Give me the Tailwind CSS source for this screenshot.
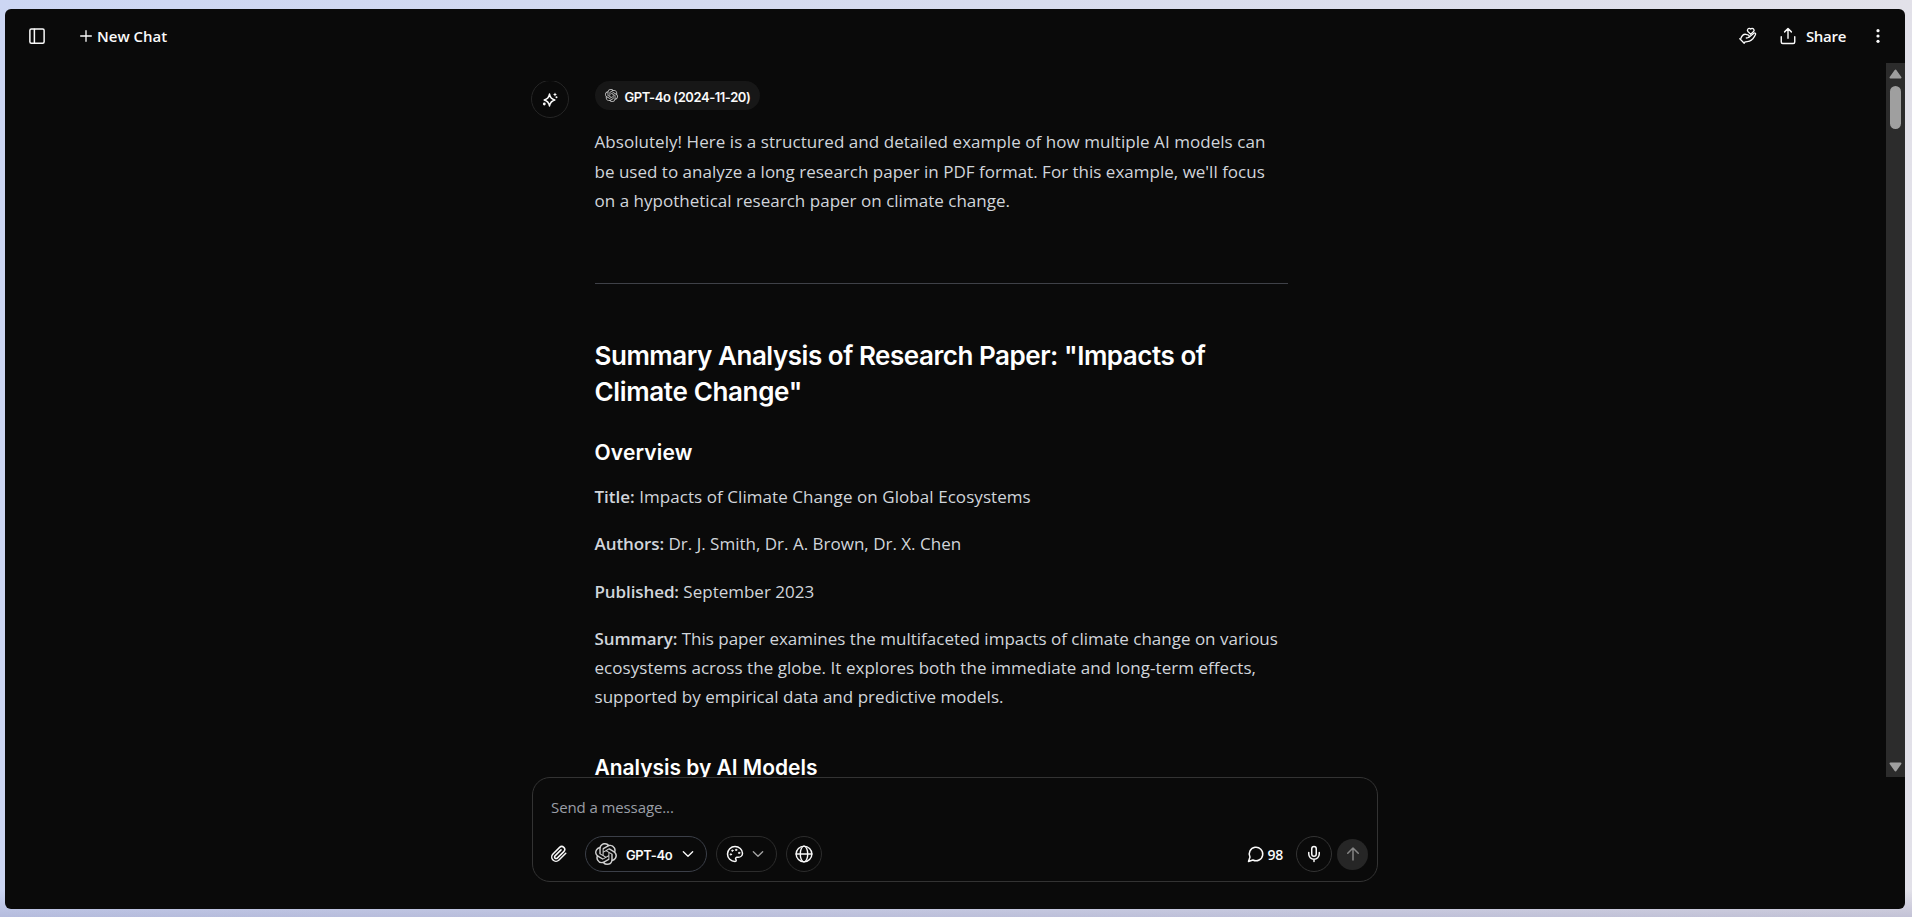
<!DOCTYPE html>
<html lang="en">
<head>
<meta charset="utf-8">
<title>Chat</title>
<script src="https://cdn.jsdelivr.net/npm/@tailwindcss/browser@4"></script>
</head>
<body class="h-screen overflow-hidden bg-linear-to-r from-[#ccd6f3] to-[#e2e1e9] font-['Open_Sans',sans-serif] text-[#fafafa]">
<svg class="hidden">
  <symbol id="openai" viewBox="0 0 24 24"><path fill="currentColor" d="M22.2819 9.8211a5.9847 5.9847 0 0 0-.5157-4.9108 6.0462 6.0462 0 0 0-6.5098-2.9A6.0651 6.0651 0 0 0 4.9807 4.1818a5.9847 5.9847 0 0 0-3.9977 2.9 6.0462 6.0462 0 0 0 .7427 7.0966 5.98 5.98 0 0 0 .511 4.9107 6.051 6.051 0 0 0 6.5146 2.9001A5.9847 5.9847 0 0 0 13.2599 24a6.0557 6.0557 0 0 0 5.7718-4.2058 5.9894 5.9894 0 0 0 3.9977-2.9001 6.0557 6.0557 0 0 0-.7475-7.0729zm-9.022 12.6081a4.4755 4.4755 0 0 1-2.8764-1.0408l.1419-.0804 4.7783-2.7582a.7948.7948 0 0 0 .3927-.6813v-6.7369l2.02 1.1686a.071.071 0 0 1 .038.052v5.5826a4.504 4.504 0 0 1-4.4945 4.4944zm-9.6607-4.1254a4.4708 4.4708 0 0 1-.5346-3.0137l.142.0852 4.783 2.7582a.7712.7712 0 0 0 .7806 0l5.8428-3.3685v2.3324a.0804.0804 0 0 1-.0332.0615L9.74 19.9502a4.4992 4.4992 0 0 1-6.1408-1.6464zM2.3408 7.8956a4.485 4.485 0 0 1 2.3655-1.9728V11.6a.7664.7664 0 0 0 .3879.6765l5.8144 3.3543-2.0201 1.1685a.0757.0757 0 0 1-.071 0l-4.8303-2.7865A4.504 4.504 0 0 1 2.3408 7.872zm16.5963 3.8558L13.1038 8.364 15.1192 7.2a.0757.0757 0 0 1 .071 0l4.8303 2.7913a4.4944 4.4944 0 0 1-.6765 8.1042v-5.6772a.79.79 0 0 0-.407-.667zm2.0107-3.0231l-.142-.0852-4.7735-2.7818a.7759.7759 0 0 0-.7854 0L9.409 9.2297V6.8974a.0662.0662 0 0 1 .0284-.0615l4.8303-2.7866a4.4992 4.4992 0 0 1 6.6802 4.66zM8.3065 12.863l-2.02-1.1638a.0804.0804 0 0 1-.038-.0567V6.0742a4.4992 4.4992 0 0 1 7.3757-3.4537l-.142.0805L8.704 5.459a.7948.7948 0 0 0-.3927.6813zm1.0976-2.3654l2.602-1.4998 2.6069 1.4998v2.9994l-2.5974 1.4997-2.6067-1.4997Z"/></symbol>
</svg>
<div class="h-full bg-linear-to-b from-transparent from-97% to-[#8a8ab4]/35 pt-[9px] pr-[7px] pb-2 pl-[5px]">
<div class="flex h-full flex-col overflow-hidden rounded-md bg-[#0a0a0a]">

  <header class="flex h-[54px] shrink-0 items-center justify-between pl-[23px] pr-[18px]">
    <div class="flex items-center">
      <svg class="size-[18px]" viewBox="0 0 24 24" fill="none" stroke="currentColor" stroke-width="2" stroke-linecap="round" stroke-linejoin="round"><rect x="2.5" y="2.5" width="19" height="19" rx="2"/><path d="M8.5 3v18"/></svg>
      <button class="ml-[32px] flex items-center gap-[3px] text-[15px] leading-5 font-semibold">
        <svg class="size-4" viewBox="0 0 24 24" fill="none" stroke="currentColor" stroke-width="2" stroke-linecap="round"><path d="M4 12h16M12 4v16"/></svg>
        <span>New Chat</span>
      </button>
    </div>
    <div class="flex items-center">
      <svg class="size-[18px]" viewBox="0 0 18 18" fill="none" stroke="currentColor" stroke-width="1.300" stroke-linecap="round" stroke-linejoin="round"><path d="M11.700 7.300 8.900 4.500a1.900 1.900 0 0 1 .1-2.600c.8-.8 2-.6 2.700.2.700-.8 2-.9 2.800-.1a1.900 1.900 0 0 1 .1 2.600z"/><path d="M.8 11.700 5.200 16.300"/><path d="M1.800 11.500c.8-2.400 2.900-4.500 5.100-4.200 1.200.2 3 .7 3.300 1.500.4 1.100-.5 2-2.900 2.200"/><path d="M10.300 9.900 14.900 6.200c1-.8 2.200.2 1.600 1.300-1.300 3-3.600 5.700-6 6.600-2 .7-3.600.3-5 1.300"/></svg>
      <div class="ml-[22px] flex items-center gap-[9px] text-[15px] leading-5 font-semibold">
        <svg class="size-[18px]" viewBox="0 0 24 24" fill="none" stroke="currentColor" stroke-width="1.9" stroke-linecap="round" stroke-linejoin="round"><path d="M3 13v7a2 2 0 0 0 2 2h14a2 2 0 0 0 2-2v-7M12 15V2.500M7.500 6.500 12 2l4.500 4.500"/></svg>
        <span class="tracking-[-0.300px]">Share</span>
      </div>
      <svg class="ml-[23px] size-[18px]" viewBox="0 0 18 18" fill="currentColor"><circle cx="9" cy="3.700" r="1.600"/><circle cx="9" cy="9" r="1.600"/><circle cx="9" cy="14.300" r="1.600"/></svg>
    </div>
  </header>

  <div class="flex h-[714px] shrink-0 overflow-hidden">
    <main class="flex flex-1 items-start gap-[25.500px] overflow-hidden pt-[18px] pl-[526px]">
      <div class="h-[38px] shrink-0 overflow-hidden">
        <div class="-mt-px flex size-[38px] items-center justify-center rounded-full border border-[#262626]">
          <svg class="size-4" viewBox="0 0 16 16" fill="none" stroke="currentColor" stroke-width="1.500" stroke-linejoin="round" stroke-linecap="round"><path d="M7.500 3.100c.6 3.500 1.900 4.900 5.300 5.900-3.400 1-4.700 2.400-5.300 5.900-.6-3.500-1.900-4.900-5.300-5.900 3.400-1 4.700-2.400 5.300-5.900z"/><g fill="currentColor" stroke="none"><path d="M13 1.200c.2 1.400.8 2 2.200 2.300-1.400.3-2 .9-2.200 2.300-.2-1.400-.8-2-2.200-2.300 1.400-.3 2-.9 2.200-2.300z"/><circle cx="14.500" cy="6.300" r="1"/><circle cx="2.300" cy="13" r="1.400"/></g></svg>
        </div>
      </div>
      <article class="w-[693px] text-[17px] leading-[29.250px] whitespace-nowrap text-[#d1d5db]">
        <div class="inline-flex h-[29px] w-[165px] items-center gap-[7px] rounded-full bg-[#171717] pl-2.5 font-['Inter',sans-serif] text-[13px] leading-[18px] font-semibold text-[#fafafa]">
          <svg class="size-[13px] text-[#c4c4c4]"><use href="#openai"/></svg>
          <span class="pt-[3px] tracking-[-0.440px]">GPT-4o (2024-11-20)</span>
        </div>
        <p class="mt-[17px]"><span class="tracking-[0.050px]">Absolutely! Here is a structured and detailed example of how multiple AI models can</span><br><span class="tracking-[0.010px]">be used to analyze a long research paper in PDF format. For this example, we'll focus</span><br><span class="tracking-[0.020px]">on a hypothetical research paper on climate change.</span></p>
        <hr class="mt-[68px] border-[#3f4148]">
        <h2 class="mt-[54px] font-['Inter',sans-serif] text-[26px] leading-9 font-semibold tracking-[-0.460px] text-white">Summary Analysis of Research Paper: "Impacts of<br><span class="tracking-[-0.350px]">Climate Change"</span></h2>
        <h3 class="mt-[28px] font-['Inter',sans-serif] text-[21px] leading-[30px] font-semibold text-white"><span class="tracking-[0.150px]">Overview</span></h3>
        <p class="mt-[14px]"><strong class="font-semibold">Title:</strong> <span class="tracking-[0.065px]">Impacts of Climate Change on Global Ecosystems</span></p>
        <p class="mt-[18px]"><strong class="font-semibold tracking-[-0.080px]">Authors:</strong> <span>Dr. J. Smith, Dr. A. Brown, Dr. X. Chen</span></p>
        <p class="mt-[18px]"><strong class="font-semibold tracking-[-0.100px]">Published:</strong> <span>September 2023</span></p>
        <p class="mt-[18px]"><strong class="font-semibold tracking-[-0.100px]">Summary:</strong> <span>This paper examines the multifaceted impacts of climate change on various</span><br><span class="tracking-[0.040px]">ecosystems across the globe. It explores both the immediate and long-term effects,</span><br><span class="tracking-[0.030px]">supported by empirical data and predictive models.</span></p>
        <h3 class="mt-[41px] font-['Inter',sans-serif] text-[21px] leading-[30px] font-semibold tracking-[-0.030px] text-white">Analysis by AI Models</h3>
      </article>
    </main>
    <div class="flex w-[19px] shrink-0 flex-col items-center bg-[#2c2c2c]">
      <svg class="mt-[5px] h-[12px] w-[13px] shrink-0" viewBox="0 0 13 12"><path fill="#9f9f9f" stroke="#9f9f9f" stroke-width="2" stroke-linejoin="round" d="M6.500 2.500 11.500 9.500h-10z"/></svg>
      <div class="mt-1.5 h-[43px] w-[11px] shrink-0 rounded-full bg-[#9f9f9f]"></div>
      <svg class="mt-auto mb-[4px] h-[12px] w-[13px] shrink-0" viewBox="0 0 13 12"><path fill="#9f9f9f" stroke="#9f9f9f" stroke-width="2" stroke-linejoin="round" d="M6.500 9.500 11.500 2.500h-10z"/></svg>
    </div>
  </div>

  <div class="flex justify-center">
    <div class="flex h-[105px] w-[846px] flex-col rounded-[18px] border border-[#333] pt-[18px] pr-[9px] pl-[17px]">
      <div class="pl-px text-[15px] leading-[22px] tracking-[-0.100px] text-[#9a9ea6]">Send a message...</div>
      <div class="mt-[18px] flex h-9 items-center font-['Inter',sans-serif] text-[13px] font-semibold">
        <svg class="size-[18px]" viewBox="0 0 24 24" fill="none" stroke="currentColor" stroke-width="2" stroke-linecap="round" stroke-linejoin="round"><path d="m21 11-9 9a5.600 5.600 0 0 1-8-8l8.800-8.800a3.900 3.900 0 0 1 5.600 5.600l-8.700 8.700a2.100 2.100 0 0 1-3-3l8-8"/></svg>
        <div class="ml-[17px] flex h-9 w-[122px] items-center rounded-full border border-[#3b3f48] pl-[9px]">
          <svg class="size-[22px] text-[#d0d0d0]"><use href="#openai"/></svg>
          <span class="ml-[9px] pt-[3px] tracking-[-0.380px]">GPT-4o</span>
          <svg class="ml-[8px] size-4" viewBox="0 0 24 24" fill="none" stroke="currentColor" stroke-width="2" stroke-linecap="round" stroke-linejoin="round"><path d="m5 8.500 7 7 7-7"/></svg>
        </div>
        <div class="ml-[9px] flex h-9 w-[61px] items-center rounded-full border border-[#2c2c2c] pl-[9px]">
          <svg class="size-[18px]" viewBox="0 0 24 24" fill="none" stroke="currentColor" stroke-width="2" stroke-linecap="round" stroke-linejoin="round"><g fill="currentColor" stroke-width="1"><circle cx="13.500" cy="6.500" r="1"/><circle cx="17.500" cy="10.500" r="1"/><circle cx="8.500" cy="7.500" r="1"/><circle cx="6.500" cy="12.500" r="1"/></g><path d="M12 2C6.500 2 2 6.500 2 12s4.500 10 10 10c.926 0 1.648-.746 1.648-1.688 0-.437-.18-.835-.437-1.125-.29-.289-.438-.652-.438-1.125a1.640 1.640 0 0 1 1.668-1.668h1.996c3.051 0 5.555-2.503 5.555-5.554C21.965 6.012 17.461 2 12 2z"/></svg>
          <svg class="ml-1.5 size-4 text-[#a3a3a3]" viewBox="0 0 24 24" fill="none" stroke="currentColor" stroke-width="2" stroke-linecap="round" stroke-linejoin="round"><path d="m5 8.500 7 7 7-7"/></svg>
        </div>
        <div class="ml-[9px] flex size-9 items-center justify-center rounded-full border border-[#2c2c2c]">
          <svg class="size-[18px]" viewBox="0 0 24 24" fill="none" stroke="currentColor" stroke-width="1.900" stroke-linecap="round"><circle cx="12" cy="12" r="10.500"/><path d="M1.500 12h21"/><ellipse cx="12" cy="12" rx="5" ry="10.500"/></svg>
        </div>
        <svg class="ml-auto size-[18px]" viewBox="0 0 24 24" fill="none" stroke="currentColor" stroke-width="2" stroke-linecap="round" stroke-linejoin="round"><path d="M7.900 20A9 9 0 1 0 4 16.100L2 22Z"/></svg>
        <span class="ml-[3px] pt-0.5 font-['Open_Sans',sans-serif] text-sm tracking-[-0.300px]">98</span>
        <div class="ml-[13px] flex size-9 items-center justify-center rounded-full border border-[#333]">
          <svg class="size-[18px]" viewBox="0 0 24 24" fill="none" stroke="currentColor" stroke-width="2" stroke-linecap="round" stroke-linejoin="round"><rect x="9" y="2" width="6" height="13" rx="3"/><path d="M19 10v2a7 7 0 0 1-14 0v-2M12 19v3"/></svg>
        </div>
        <div class="ml-[5px] flex size-[31px] items-center justify-center rounded-full bg-[#262626] text-[#858585]">
          <svg class="size-[18px]" viewBox="0 0 24 24" fill="none" stroke="currentColor" stroke-width="2" stroke-linecap="round" stroke-linejoin="round"><path d="M12 20V4M5 11l7-7 7 7"/></svg>
        </div>
      </div>
    </div>
  </div>

</div>
</div>
</body>
</html>
